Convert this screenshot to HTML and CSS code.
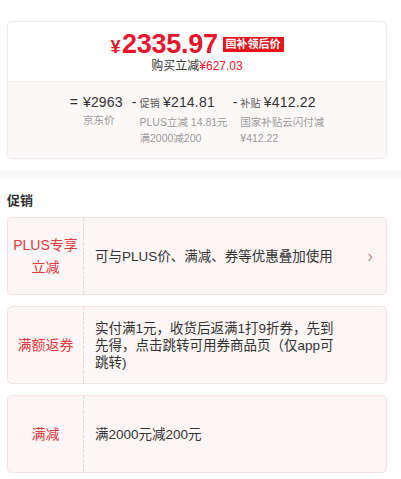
FILE: index.html
```html
<!DOCTYPE html>
<html lang="zh-CN">
<head>
  <meta charset="UTF-8" />
  <meta name="viewport" content="width=device-width, initial-scale=1.0"/>
  <title>价格明细</title>
  <link rel="stylesheet" href="styles.css">
</head>
<body>
  <div class="price-card">
    <div class="price-top">
      <div class="price-row">
        <span class="price"><span class="yen">¥</span>2335.97</span>
        <span class="badge">国补领后价</span>
      </div>
      <div class="saved">购买立减<span class="red">¥627.03</span></div>
    </div>

    <div class="price-calc">
      <div class="calc-col calc-base">
        <span class="op op-eq">=</span>
        <div class="calc-body">
          <div class="calc-main">¥2963</div>
          <div class="calc-sub">京东价</div>
        </div>
      </div>
      <div class="calc-col">
        <span class="op">-</span>
        <div class="calc-body">
          <div class="calc-main"><span class="tag">促销</span>¥214.81</div>
          <div class="calc-sub">PLUS立减 14.81元</div>
          <div class="calc-sub">满2000减200</div>
        </div>
      </div>
      <div class="calc-col">
        <span class="op">-</span>
        <div class="calc-body">
          <div class="calc-main"><span class="tag">补贴</span>¥412.22</div>
          <div class="calc-sub">国家补贴云闪付减</div>
          <div class="calc-sub">¥412.22</div>
        </div>
      </div>
    </div>
  </div>

  <div class="divider"></div>

  <h3 class="section-title">促销</h3>

  <div class="promo">
    <div class="promo-label">PLUS专享<br>立减</div>
    <div class="promo-desc">可与PLUS价、满减、券等优惠叠加使用</div>
    <div class="promo-more">&rsaquo;</div>
  </div>

  <div class="promo">
    <div class="promo-label">满额返券</div>
    <div class="promo-desc">实付满1元，收货后返满1打9折券，先到先得，点击跳转可用券商品页（仅app可跳转)</div>
    <div class="promo-more"></div>
  </div>

  <div class="promo">
    <div class="promo-label">满减</div>
    <div class="promo-desc">满2000元减200元</div>
    <div class="promo-more"></div>
  </div>
</body>
</html>
```

FILE: styles.css
```css
body {
  margin: 0;
  padding: 21px 14px 0 7px;
  font-family: "Liberation Sans", "Noto Sans CJK SC", sans-serif;
  color: #333;
  background: #fff;
}

.price-card {
  border: 1px solid #ececec;
  border-radius: 6px;
  box-shadow: 0 0 3px rgba(0, 0, 0, 0.06);
  overflow: hidden;
}

.price-top {
  padding: 7px 0 8px;
  text-align: center;
}

.price-row {
  display: flex;
  justify-content: center;
  align-items: center;
  height: 30px;
}

.price {
  color: #e6162d;
  font-size: 27px;
  font-weight: bold;
  letter-spacing: -0.3px;
}

.yen {
  font-size: 18px;
  margin-right: 2px;
}

.badge {
  margin-left: 5px;
  background: #e8141c;
  color: #fff;
  font-size: 11px;
  font-weight: bold;
  line-height: 15px;
  padding: 0 3px;
}

.saved {
  font-size: 12px;
  line-height: 14px;
}

.red {
  color: #e6162d;
}

.price-calc {
  background: #fdf8f8;
  border-top: 1px solid #f8eeee;
  display: flex;
  justify-content: center;
  gap: 5px;
  padding: 10px 0 12px;
}

.calc-col {
  display: flex;
}

.calc-base {
  margin-right: 4px;
}

.op {
  font-size: 14px;
  line-height: 20px;
  margin-right: 3px;
}

.op-eq {
  margin-right: 5px;
}

.calc-main {
  font-size: 14px;
  line-height: 20px;
  letter-spacing: 0.2px;
}

.tag {
  font-size: 10px;
  color: #555;
  margin-right: 3px;
}

.calc-sub {
  font-size: 10.5px;
  line-height: 16px;
  color: #999;
}

.divider {
  height: 8px;
  margin: 12px -14px 0 -7px;
  background: #f8f8f8;
}

.section-title {
  margin: 12px 0 6px;
  font-size: 13px;
  line-height: 20px;
}

.promo {
  display: flex;
  min-height: 76px;
  margin-bottom: 11px;
  border: 1px solid #f2e2e2;
  border-radius: 5px;
  background: #fdf6f6;
}

.promo-label {
  width: 75px;
  border-right: 1px dashed #e6d4d4;
  display: flex;
  align-items: center;
  justify-content: center;
  text-align: center;
  color: #e4393c;
  font-size: 14px;
  line-height: 22px;
}

.promo-desc {
  flex: 1;
  display: flex;
  align-items: center;
  padding: 0 12px 0 11px;
  font-size: 13.5px;
  line-height: 17px;
}

.promo-more {
  width: 32px;
  display: flex;
  align-items: center;
  justify-content: center;
  color: #b99;
  font-size: 18px;
}
```
